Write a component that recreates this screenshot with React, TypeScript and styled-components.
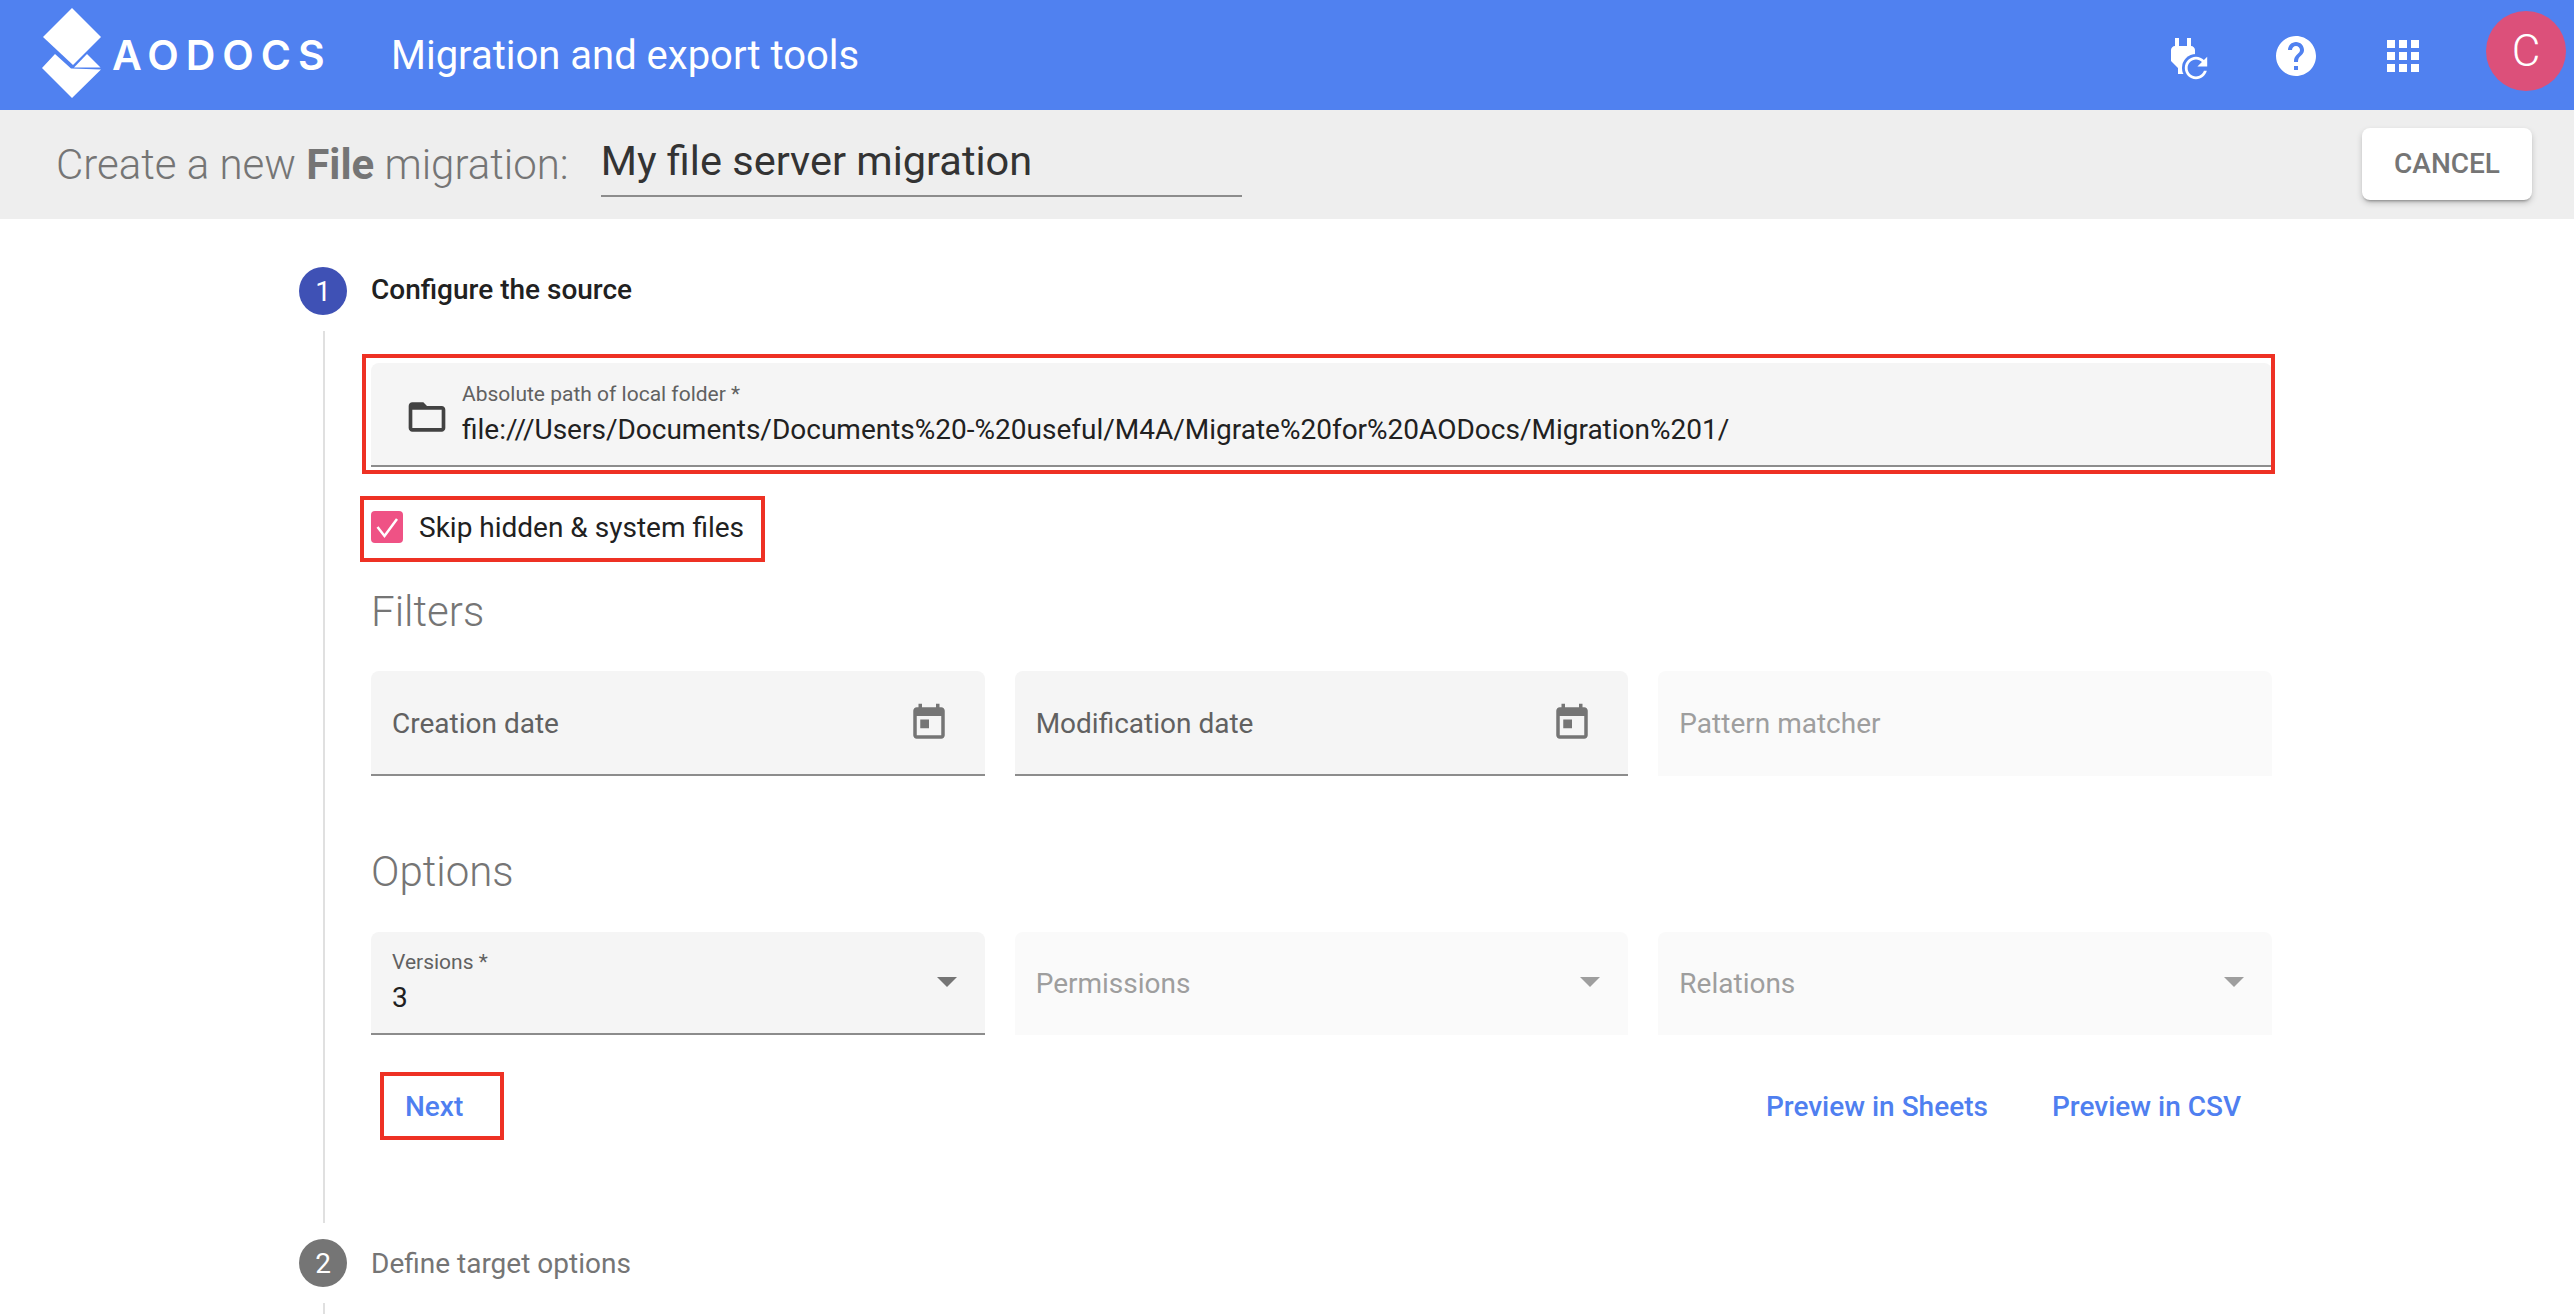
import React from "react";
import styled, { createGlobalStyle } from "styled-components";

const GlobalStyle = createGlobalStyle`
    html, body {
        margin: 0;
        height: 100%;
        overflow: hidden;
        background: #ffffff;
    }
    body {
        font-family: Roboto, "Liberation Sans", sans-serif;
    }
`;

const HELP_PATH =
    "M12 2C6.48 2 2 6.48 2 12s4.48 10 10 10 10-4.48 10-10S17.52 2 12 2zm1 17h-2v-2h2v2zm2.07-7.75l-.9.92C13.45 12.9 13 13.5 13 15h-2v-.5c0-1.1.45-2.1 1.17-2.83l1.24-1.26c.37-.36.59-.86.59-1.41 0-1.1-.9-2-2-2s-2 .9-2 2H8c0-2.21 1.79-4 4-4s4 1.79 4 4c0 .88-.36 1.68-.93 2.25z";
const APPS_PATH =
    "M4 8h4V4H4v4zm6 12h4v-4h-4v4zm-6 0h4v-4H4v4zm0-6h4v-4H4v4zm6 0h4v-4h-4v4zm6-10v4h4V4h-4zm-6 4h4V4h-4v4zm6 6h4v-4h-4v4zm0 6h4v-4h-4v4z";
const POWER_PATH =
    "M16.01 7L16 3h-2v4h-4V3H8v4h-.01C7 6.99 6 7.99 6 8.99v5.49L9.5 18v3h5v-3l3.5-3.51v-5.5c0-1-1-2-1.99-1.99z";
const REFRESH_PATH =
    "M17.65 6.35C16.2 4.9 14.21 4 12 4c-4.42 0-7.99 3.58-7.99 8s3.57 8 7.99 8c3.73 0 6.84-2.55 7.73-6h-2.08c-.82 2.33-3.04 4-5.65 4-3.31 0-6-2.69-6-6s2.69-6 6-6c1.66 0 3.14.69 4.22 1.78L13 11h7V4l-2.35 2.35z";
const FOLDER_PATH =
    "M20 6h-8l-2-2H4c-1.1 0-1.99.9-1.99 2L2 18c0 1.1.9 2 2 2h16c1.1 0 2-.9 2-2V8c0-1.1-.9-2-2-2zm0 12H4V8h16v10z";
const TODAY_PATH =
    "M19 3h-1V1h-2v2H8V1H6v2H5c-1.11 0-1.99.9-1.99 2L3 19c0 1.1.89 2 2 2h14c1.1 0 2-.9 2-2V5c0-1.1-.9-2-2-2zm0 16H5V8h14v11zM7 10h5v5H7z";

const HEADER_BLUE = "#5081f0";

const LogoMark = () => (
    <LogoSvg viewBox="0 0 60 92">
        <path d="M30 0 L59 29 L31 57 L1 29 Z" fill="#fff" />
        <path d="M13 46 L29 60.5 L59 61.5 L30 90 L0 60 Z" fill="#fff" />
        <path d="M45 46 L58.5 59.5 L32 59.5 Z" fill="#fff" />
    </LogoSvg>
);

const PlugIcon = () => (
    <IconSvg viewBox="0 0 48 48">
        <path d={POWER_PATH} transform="translate(-6 0) scale(2)" fill="#fff" />
        <circle cx="31" cy="36" r="14" fill={HEADER_BLUE} />
        <path d={REFRESH_PATH} transform="translate(14.2 19.2) scale(1.4)" fill="#fff" />
    </IconSvg>
);

const DateField = ({ label }: { label: string }) => (
    <Field>
        <FieldText>
            <FieldPlaceholder>{label}</FieldPlaceholder>
        </FieldText>
        <TodayIcon viewBox="0 0 24 24">
            <path d={TODAY_PATH} />
        </TodayIcon>
    </Field>
);

const SelectField = ({ label, value, disabled }: { label: string; value?: string; disabled?: boolean }) => (
    <Field $disabled={disabled} $short>
        <FieldText>
            {value ? (
                <>
                    <FieldLabel>{label}</FieldLabel>
                    <FieldValue>{value}</FieldValue>
                </>
            ) : (
                <FieldPlaceholder $disabled={disabled}>{label}</FieldPlaceholder>
            )}
        </FieldText>
        <SelectArrow $disabled={disabled} />
    </Field>
);

export default function App() {
    return (
        <>
            <GlobalStyle />
            <Header>
                <Logo>
                    <LogoMark />
                    <LogoText>AODOCS</LogoText>
                </Logo>
                <AppTitle>Migration and export tools</AppTitle>
                <HeaderActions>
                    <PlugIcon />
                    <IconSvg viewBox="0 0 24 24">
                        <path d={HELP_PATH} fill="#fff" />
                    </IconSvg>
                    <IconSvg viewBox="0 0 24 24">
                        <path d={APPS_PATH} fill="#fff" />
                    </IconSvg>
                    <Avatar>C</Avatar>
                </HeaderActions>
            </Header>

            <SubBar>
                <SubTitle>
                    Create a new <b>File</b> migration:
                </SubTitle>
                <NameInput>My file server migration</NameInput>
                <CancelButton>CANCEL</CancelButton>
            </SubBar>

            <Main>
                <StepHeader>
                    <StepCircle $active>1</StepCircle>
                    <StepTitle $active>Configure the source</StepTitle>
                </StepHeader>

                <StepBody>
                    <Highlighted $inset="-9px -3px -7px -9px">
                        <PathField>
                            <FolderIcon viewBox="0 0 24 24">
                                <path d={FOLDER_PATH} />
                            </FolderIcon>
                            <FieldText>
                                <FieldLabel>Absolute path of local folder *</FieldLabel>
                                <FieldValue>
                                    file:///Users/Documents/Documents%20-%20useful/M4A/Migrate%20for%20AODocs/Migration%201/
                                </FieldValue>
                            </FieldText>
                        </PathField>
                    </Highlighted>

                    <CheckRow>
                        <Highlighted $inset="-15px -21px -19px -11px">
                            <CheckLabel>
                                <CheckBox viewBox="0 0 32 32">
                                    <path d="M6.5 16 L13.5 25 L26 8" />
                                </CheckBox>
                                Skip hidden &amp; system files
                            </CheckLabel>
                        </Highlighted>
                    </CheckRow>

                    <SectionTitle>Filters</SectionTitle>
                    <FieldRow>
                        <DateField label="Creation date" />
                        <DateField label="Modification date" />
                        <Field $disabled>
                            <FieldText>
                                <FieldPlaceholder $disabled>Pattern matcher</FieldPlaceholder>
                            </FieldText>
                        </Field>
                    </FieldRow>

                    <SectionTitle $spaced>Options</SectionTitle>
                    <FieldRow>
                        <SelectField label="Versions *" value="3" />
                        <SelectField label="Permissions" disabled />
                        <SelectField label="Relations" disabled />
                    </FieldRow>

                    <Actions>
                        <Highlighted $inset="-6px -22px -6px -6px">
                            <TextButton>Next</TextButton>
                        </Highlighted>
                        <PreviewLinks>
                            <TextButton>Preview in Sheets</TextButton>
                            <TextButton>Preview in CSV</TextButton>
                        </PreviewLinks>
                    </Actions>
                </StepBody>

                <StepHeader>
                    <StepCircle>2</StepCircle>
                    <StepTitle>Define target options</StepTitle>
                </StepHeader>
                <StepTail />
            </Main>
        </>
    );
}

const Header = styled.header`
    height: 110px;
    background: ${HEADER_BLUE};
    display: flex;
    align-items: center;
    padding: 0 8px 0 42px;
    box-sizing: border-box;
    color: #fff;
`;

const Logo = styled.div`
    display: flex;
    align-items: center;
    gap: 10px;
    width: 349px;
    margin-top: -2px;
`;

const LogoSvg = styled.svg`
    width: 60px;
    height: 92px;
    flex: none;
`;

const LogoText = styled.span`
    font-family: Inter, sans-serif;
    font-size: 41px;
    font-weight: 600;
    letter-spacing: 7px;
    line-height: 1;
    margin-top: 3px;
`;

const AppTitle = styled.div`
    font-size: 40px;
    font-weight: 400;
    line-height: 48px;
    margin-top: 2px;
`;

const HeaderActions = styled.div`
    margin-left: auto;
    display: flex;
    align-items: center;
    gap: 59px;
`;

const IconSvg = styled.svg`
    width: 48px;
    height: 48px;
    margin-top: 2px;
    flex: none;
`;

const Avatar = styled.div`
    width: 80px;
    height: 80px;
    border-radius: 50%;
    background: #dc507a;
    display: flex;
    align-items: center;
    justify-content: center;
    font-size: 44px;
    font-weight: 300;
    margin-top: -8px;
`;

const SubBar = styled.div`
    height: 109px;
    background: #eeeeee;
    display: flex;
    align-items: center;
    padding: 0 42px 0 56px;
    box-sizing: border-box;
`;

const SubTitle = styled.div`
    font-size: 42px;
    font-weight: 300;
    color: #757575;
    line-height: 56px;
    white-space: nowrap;
    margin-top: 0;

    b {
        font-weight: 700;
    }
`;

const NameInput = styled.div`
    width: 641px;
    margin-left: 32px;
    font-size: 41.5px;
    color: #333333;
    line-height: 56px;
    height: 62px;
    padding-top: 2px;
    margin-top: -2px;
    border-bottom: 2px solid #8c8c8c;
`;

const CancelButton = styled.button`
    margin-left: auto;
    margin-top: -2px;
    width: 170px;
    height: 72px;
    border: none;
    border-radius: 8px;
    background: #fff;
    color: #757575;
    font-family: inherit;
    font-size: 28px;
    font-weight: 500;
    box-shadow: 0 3px 3px -2px rgba(0, 0, 0, 0.35), 0 3px 6px 0 rgba(0, 0, 0, 0.18);
`;

const Main = styled.main`
    padding: 48px 302px 0 299px;
`;

const StepHeader = styled.div`
    display: flex;
    align-items: center;
    gap: 24px;
    height: 48px;
`;

const StepCircle = styled.div<{ $active?: boolean }>`
    width: 48px;
    height: 48px;
    border-radius: 50%;
    background: ${(p) => (p.$active ? "#3f51b5" : "#757575")};
    color: #fff;
    font-size: 28px;
    display: flex;
    align-items: center;
    justify-content: center;
    flex: none;
`;

const StepTitle = styled.div<{ $active?: boolean }>`
    font-size: 28px;
    font-weight: ${(p) => (p.$active ? 500 : 400)};
    color: ${(p) => (p.$active ? "#212121" : "#757575")};
    margin-top: ${(p) => (p.$active ? "-3px" : "0")};
`;

const StepBody = styled.div`
    margin: 16px 0 16px 24px;
    border-left: 2px solid #e0e0e0;
    padding: 32px 0 89px 46px;
`;

const StepTail = styled.div`
    margin: 16px 0 0 24px;
    height: 40px;
    border-left: 2px solid #e0e0e0;
`;

const Highlighted = styled.div<{ $inset: string }>`
    position: relative;

    &::after {
        content: "";
        position: absolute;
        inset: ${(p) => p.$inset};
        border: 4px solid #ee3124;
        pointer-events: none;
    }
`;

const Field = styled.div<{ $disabled?: boolean; $short?: boolean }>`
    height: ${(p) => (p.$short ? "103px" : "105px")};
    box-sizing: border-box;
    background: ${(p) => (p.$disabled ? "#fafafa" : "#f5f5f5")};
    border-radius: 8px 8px 0 0;
    border-bottom: 2px solid ${(p) => (p.$disabled ? "#fafafa" : "#8c8c8c")};
    display: flex;
    align-items: center;
    padding: 0 28px 0 21px;
`;

const PathField = styled(Field)`
    height: 104px;
    padding: 0 20px 0 34px;
    gap: 13px;
`;

const FieldText = styled.div`
    display: flex;
    flex-direction: column;
    gap: 6px;
    flex: 1;
    min-width: 0;
`;

const FieldLabel = styled.div`
    font-size: 21px;
    line-height: 24px;
    color: #616161;
    margin-top: 1px;
`;

const FieldValue = styled.div`
    font-size: 28px;
    line-height: 36px;
    color: #212121;
    white-space: nowrap;
`;

const FieldPlaceholder = styled.div<{ $disabled?: boolean }>`
    font-size: 28px;
    line-height: 36px;
    margin-top: 3px;
    color: ${(p) => (p.$disabled ? "#9e9e9e" : "#616161")};
`;

const FolderIcon = styled.svg`
    width: 44px;
    height: 44px;
    flex: none;
    margin-top: 6px;
    fill: #424242;
`;

const TodayIcon = styled.svg`
    width: 42px;
    height: 42px;
    flex: none;
    margin-right: 7px;
    fill: #757575;
`;

const SelectArrow = styled.div<{ $disabled?: boolean }>`
    width: 0;
    height: 0;
    flex: none;
    margin-top: -2px;
    border-left: 10px solid transparent;
    border-right: 10px solid transparent;
    border-top: 10px solid ${(p) => (p.$disabled ? "#9e9e9e" : "#757575")};
`;

const CheckRow = styled.div`
    display: flex;
    margin-top: 44px;
`;

const CheckLabel = styled.div`
    display: flex;
    align-items: center;
    gap: 16px;
    height: 32px;
    font-size: 28px;
    color: #212121;
`;

const CheckBox = styled.svg`
    width: 32px;
    height: 32px;
    flex: none;
    border-radius: 4px;
    background: #ef5285;
    fill: none;
    stroke: #fff;
    stroke-width: 2.5px;
`;

const SectionTitle = styled.div<{ $spaced?: boolean }>`
    font-size: 42px;
    font-weight: 300;
    color: #757575;
    line-height: 56px;
    margin: ${(p) => (p.$spaced ? "68px 0 32px" : "41px 0 31px")};
`;

const FieldRow = styled.div`
    display: grid;
    grid-template-columns: repeat(3, 1fr);
    gap: 30px;
`;

const Actions = styled.div`
    display: flex;
    justify-content: space-between;
    align-items: center;
    margin-top: 43px;
    padding: 0 32px 0 15px;
`;

const PreviewLinks = styled.div`
    display: flex;
    gap: 26px;
    margin-right: -20px;
`;

const TextButton = styled.button`
    height: 56px;
    padding: 0 19px;
    border: none;
    background: none;
    color: #4f7ff0;
    font-family: inherit;
    font-size: 28px;
    font-weight: 500;
    display: block;
`;
